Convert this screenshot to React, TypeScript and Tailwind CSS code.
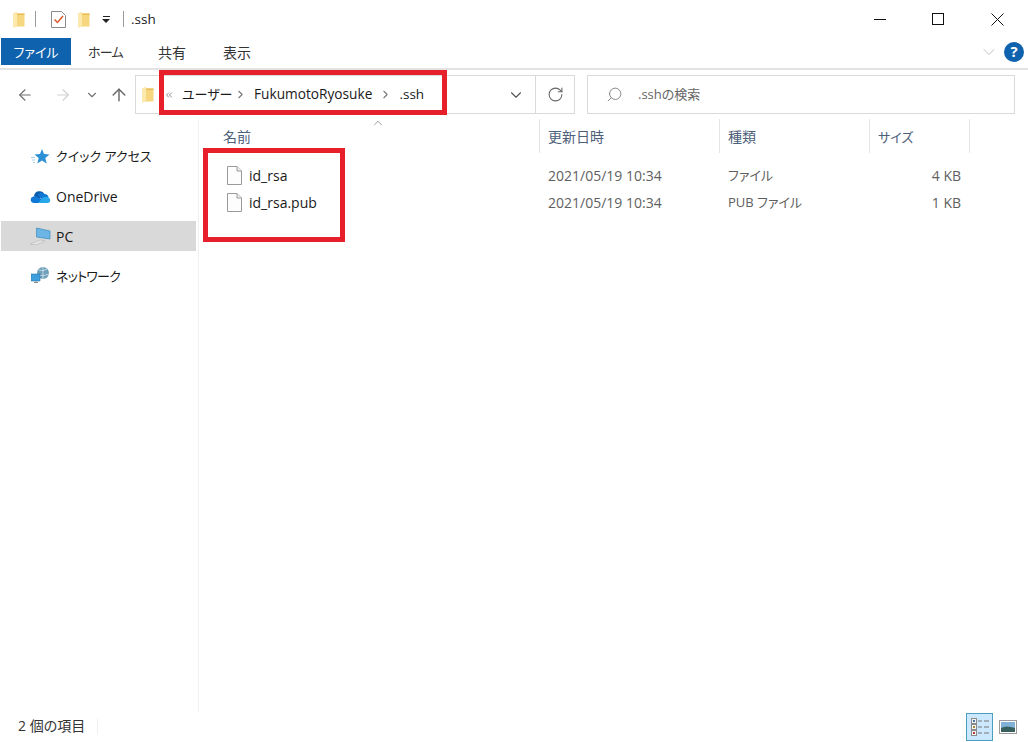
import { ArrowLeft, ArrowRight, ArrowUp, ChevronDown, ChevronRight, ChevronUp, ChevronsLeft, RotateCw, Search } from "lucide-react"

function Folder({ className }: { className?: string }) {
  return (
    <svg className={className} viewBox="0 0 13 17">
      <path d="M1 2.5 L5 1 V2.5 H12.5 V15.5 H5 L1 16.5 Z" fill="#f6d77f" />
      <path d="M1 2.5 L5 1 V15.5 L1 16.5 Z" fill="#fbe9ae" />
      <path d="M5 2.5 H12.5 V4 H5 Z" fill="#e8bd55" />
    </svg>
  )
}

function CheckDoc() {
  return (
    <svg className="h-[17px] w-[15px]" viewBox="0 0 15 17">
      <path d="M.5.5 H10.5 L14.5 4.5 V16.5 H.5 Z" fill="#fff" stroke="#8b8b8b" />
      <path d="M3.5 8.5 L6.5 11.5 L12 5" fill="none" stroke="#d9572b" strokeWidth="1.5" />
    </svg>
  )
}

function FileIcon() {
  return (
    <svg className="h-[19px] w-[15px] shrink-0" viewBox="0 0 15 19">
      <path d="M.5.5 H10 L14.5 5 V18.5 H.5 Z" fill="#fdfdfd" stroke="#9a9a9a" />
      <path d="M10 .5 V5 H14.5" fill="#efefef" stroke="#9a9a9a" />
    </svg>
  )
}

function StarIcon() {
  return (
    <svg className="h-[17px] w-[19px]" viewBox="0 0 19 16">
      <path d="M0 9 H4 M1 11.5 H4 M2 14 H4" stroke="#a9cde8" strokeWidth="1" />
      <path d="M11 .5 L13 5.5 L18.5 6 L14.3 9.5 L15.7 15 L11 12 L6.3 15 L7.7 9.5 L3.5 6 L9 5.5 Z" fill="#2b8fd6" />
    </svg>
  )
}

function CloudIcon() {
  return (
    <svg className="h-[13px] w-[21px]" viewBox="0 0 21 13">
      <path d="M4 6.5 A5.5 5.5 0 0 1 14.5 4.5 L9 9 Z" fill="#0b5cad" />
      <path d="M8 5 A4 4 0 0 1 14.5 4 A4 4 0 0 1 18.5 7.5 L13 10 Z" fill="#0f78d4" />
      <path d="M3.5 13 A3.3 3.3 0 0 1 3.5 6.5 Q7 5.5 9 8 L14 9 L17 13 Z" fill="#0f78d4" />
      <path d="M8 13 L13 7.5 Q17 6 18.5 7.5 A2.9 2.9 0 0 1 18 13 Z" fill="#28a8ea" />
    </svg>
  )
}

function PcIcon() {
  return (
    <svg className="h-[18px] w-[21px]" viewBox="0 0 21 18">
      <path d="M6.5 1 L20 4 V12 L6.5 10 Z" fill="#6cb6e6" stroke="#3a89c0" strokeWidth=".7" />
      <path d="M0 17 L10 13 L15 14 L6 18 Z" fill="#e4e4e4" stroke="#b5b5b5" strokeWidth=".6" />
    </svg>
  )
}

function NetworkIcon() {
  return (
    <svg className="h-[18px] w-[19px]" viewBox="0 0 19 18">
      <circle cx="12" cy="6" r="6" fill="#6f9fb8" />
      <path d="M8 3 Q12 5 16 2 M7 8 Q12 10 18 7 M12 0 V12" stroke="#d5e7f1" strokeWidth=".8" fill="none" />
      <path d="M0 7 H9 V14 H0 Z" fill="#3f9fdc" stroke="#2a76ad" strokeWidth=".6" />
      <path d="M3 15.5 H7 M5 14 V16" stroke="#8a8a8a" />
    </svg>
  )
}

function DetailsIcon() {
  return (
    <svg className="h-[18px] w-[18px]" viewBox="0 0 18 18">
      <g fill="#f3f3f3" stroke="#8a8a8a" strokeWidth="1">
        <rect x=".5" y=".5" width="5" height="5" />
        <rect x=".5" y="6.5" width="5" height="5" />
        <rect x=".5" y="12.5" width="5" height="5" />
      </g>
      <rect x="2" y="2" width="2" height="2" fill="#48789c" />
      <rect x="2" y="8" width="2" height="2" fill="#a98b3c" />
      <rect x="2" y="14" width="2" height="2" fill="#b53a3a" />
      <path d="M7 3 H11 M13 3 H18 M7 9 H11 M13 9 H18 M7 15 H11 M13 15 H18" stroke="#777" strokeWidth="1" />
    </svg>
  )
}

function ThumbIcon() {
  return (
    <svg className="h-[14px] w-[18px]" viewBox="0 0 18 14">
      <rect x=".5" y=".5" width="17" height="13" fill="#fff" stroke="#9b9b9b" />
      <rect x="2" y="2" width="14" height="10" fill="#7fb2d6" />
      <path d="M2 8 Q7 5 16 8 V12 H2 Z" fill="#37605f" />
    </svg>
  )
}

const navItems = [
  { label: "クイック アクセス", icon: <StarIcon />, active: false, text: "mt-[2px] text-[13px]" },
  { label: "OneDrive", icon: <CloudIcon />, active: false, text: "" },
  { label: "PC", icon: <PcIcon />, active: true, text: "" },
  { label: "ネットワーク", icon: <NetworkIcon />, active: false, text: "mt-[1px] text-[13px] tracking-[-0.8px]" },
]

const files = [
  { name: "id_rsa", date: "2021/05/19 10:34", type: "ファイル", size: "4 KB" },
  { name: "id_rsa.pub", date: "2021/05/19 10:34", type: "PUB ファイル", size: "1 KB" },
]

export default function App() {
  return (
    <div className="relative flex h-[742px] w-[1028px] flex-col overflow-hidden bg-white font-['Open_Sans','Noto_Sans_CJK_JP',sans-serif] text-[14px] text-[#1a1a1a] [font-feature-settings:'palt']">
      {/* title bar */}
      <div className="flex h-[38px] items-center">
        <Folder className="ml-[12px] h-[17px] w-[13px]" />
        <div className="ml-[10px] h-[16px] w-px bg-[#9a9a9a]" />
        <div className="ml-[15px]"><CheckDoc /></div>
        <Folder className="ml-[11px] h-[17px] w-[13px]" />
        <div className="ml-[12px] flex w-[8px] flex-col items-center gap-[2px]">
          <div className="h-px w-[7px] bg-[#222]" />
          <div className="h-0 w-0 border-x-[4px] border-t-[4px] border-x-transparent border-t-[#222]" />
        </div>
        <div className="ml-[13px] h-[16px] w-px bg-[#9a9a9a]" />
        <span className="ml-[7px] text-[13.5px]">.ssh</span>
        <div className="ml-auto flex h-full items-center">
          <div className="h-px w-[12px] bg-[#111]" />
          <div className="ml-[46px] h-[12px] w-[12px] border border-[#111]" />
          <svg className="ml-[47px] mr-[24px] h-[13px] w-[13px]" viewBox="0 0 13 13">
            <path d="M.5.5 L12.5 12.5 M12.5.5 L.5 12.5" stroke="#111" strokeWidth="1" />
          </svg>
        </div>
      </div>

      {/* ribbon tabs */}
      <div className="flex h-[32px] border-b-2 border-[#e3e3e3] pb-[3px] pl-px">
        <div className="flex w-[70px] items-center justify-center bg-[#0f62ad] pt-[2px] text-[13px] text-white">ファイル</div>
        <span className="ml-[17px] mt-[2px] w-[34px] self-center whitespace-nowrap text-[13px] tracking-[-0.8px] text-[#333]">ホーム</span>
        <span className="ml-[36px] mt-[1px] self-center text-[#333]">共有</span>
        <span className="ml-[37px] mt-[1px] self-center text-[#333]">表示</span>
        <div className="ml-auto flex items-center">
          <ChevronDown className="h-[20px] w-[20px] text-[#b5b5b5]" strokeWidth={1} />
          <div className="ml-[5px] mr-[4px] flex h-[20px] w-[20px] items-center justify-center rounded-full bg-[#0f62ad] text-[15px] font-bold text-white">?</div>
        </div>
      </div>

      {/* address row */}
      <div className="flex h-[49px] items-center">
        <ArrowLeft className="ml-[16px] h-[18px] w-[18px] text-[#6f6f6f]" strokeWidth={1.5} />
        <ArrowRight className="ml-[20px] h-[18px] w-[18px] text-[#d0d0d0]" strokeWidth={1.5} />
        <ChevronDown className="ml-[13px] h-[14px] w-[14px] text-[#777]" strokeWidth={2} />
        <ArrowUp className="ml-[10px] h-[20px] w-[20px] text-[#666]" strokeWidth={1.7} />
        <div className="ml-[6px] flex h-[39px] w-[440px] items-center border border-[#d9d9d9]">
          <Folder className="ml-[5px] h-[17px] w-[13px]" />
          <ChevronsLeft className="ml-[10px] h-[10px] w-[10px] text-[#777]" />
          <span className="ml-[8px] mt-[1px] w-[44px] whitespace-nowrap text-[13px]">ユーザー</span>
          <ChevronRight className="ml-[8px] h-[13px] w-[13px] text-[#777]" />
          <span className="ml-[7px] text-[13.7px]">FukumotoRyosuke</span>
          <ChevronRight className="ml-[7px] h-[13px] w-[13px] text-[#777]" />
          <span className="ml-[7px] text-[13.5px]">.ssh</span>
          <ChevronDown className="ml-auto mr-[10px] h-[18px] w-[18px] text-[#555]" strokeWidth={1.5} />
          <div className="flex h-full w-[39px] items-center justify-center border-l border-[#d9d9d9]">
            <RotateCw className="h-[17px] w-[17px] text-[#666]" strokeWidth={1.5} />
          </div>
        </div>
        <div className="ml-[12px] flex h-[39px] w-[428px] items-center border border-[#d9d9d9] text-[#666]">
          <Search className="ml-[18px] h-[17px] w-[17px] -scale-x-100 text-[#777]" strokeWidth={1.2} />
          <span className="ml-[15px] text-[13px]">.sshの検索</span>
        </div>
      </div>

      {/* main */}
      <div className="flex min-h-0 flex-1">
        <aside className="w-[199px] shrink-0 border-r border-[#f0f0f0] pl-px pt-[22px]">
          {navItems.map((item) => (
            <div
              key={item.label}
              className={`mb-[10px] flex h-[30px] w-[195px] items-center ${item.active ? "bg-[#d9d9d9]" : ""}`}
            >
              <div className="ml-[29px] flex w-[21px] justify-center">{item.icon}</div>
              <span className={`ml-[5px] ${item.text}`}>{item.label}</span>
            </div>
          ))}
        </aside>

        <div className="flex-1">
          <div className="relative flex h-[34px] text-[#4c607a]">
            <ChevronUp className="absolute left-[172px] top-[-3px] h-[14px] w-[14px] text-[#777]" strokeWidth={1.2} />
            <div className="flex w-[341px] items-center border-r border-[#e5e5e5] pl-[24px]">名前</div>
            <div className="flex w-[180px] items-center border-r border-[#e5e5e5] pl-[8px]">更新日時</div>
            <div className="flex w-[150px] items-center border-r border-[#e5e5e5] pl-[8px]">種類</div>
            <div className="flex w-[100px] items-center border-r border-[#e5e5e5] pl-[8px] pt-[3px] text-[13px]">サイズ</div>
          </div>
          <div className="pt-[9px]">
            {files.map((f) => (
              <div key={f.name} className="flex h-[27px] items-center">
                <div className="flex w-[341px] items-center pl-[28px]">
                  <FileIcon />
                  <span className="ml-[7px]">{f.name}</span>
                </div>
                <div className="w-[180px] pl-[8px] text-[#5f5f5f]">{f.date}</div>
                <div className="w-[150px] pl-[8px] text-[13px] text-[#5f5f5f]">{f.type}</div>
                <div className="w-[91px] text-right text-[#5f5f5f]">{f.size}</div>
              </div>
            ))}
          </div>
        </div>
      </div>

      {/* status bar */}
      <div className="flex h-[30px] items-center">
        <span className="mb-[3px] ml-[18px] text-[#333]">2 個の項目</span>
        <div className="ml-[12px] h-[16px] w-px bg-[#eeeeee]" />
        <div className="ml-auto flex h-[28px] w-[27px] items-center justify-center border border-[#4a9fbf] bg-[#cce8ff]">
          <DetailsIcon />
        </div>
        <div className="ml-[6px] mr-[11px]"><ThumbIcon /></div>
      </div>

      {/* red highlight frames */}
      <div className="absolute left-[159px] top-[70px] h-[45px] w-[288px] border-[5px] border-[#e71f2b]" />
      <div className="absolute left-[203px] top-[148px] h-[94px] w-[142px] border-[5px] border-[#e71f2b]" />
    </div>
  )
}
